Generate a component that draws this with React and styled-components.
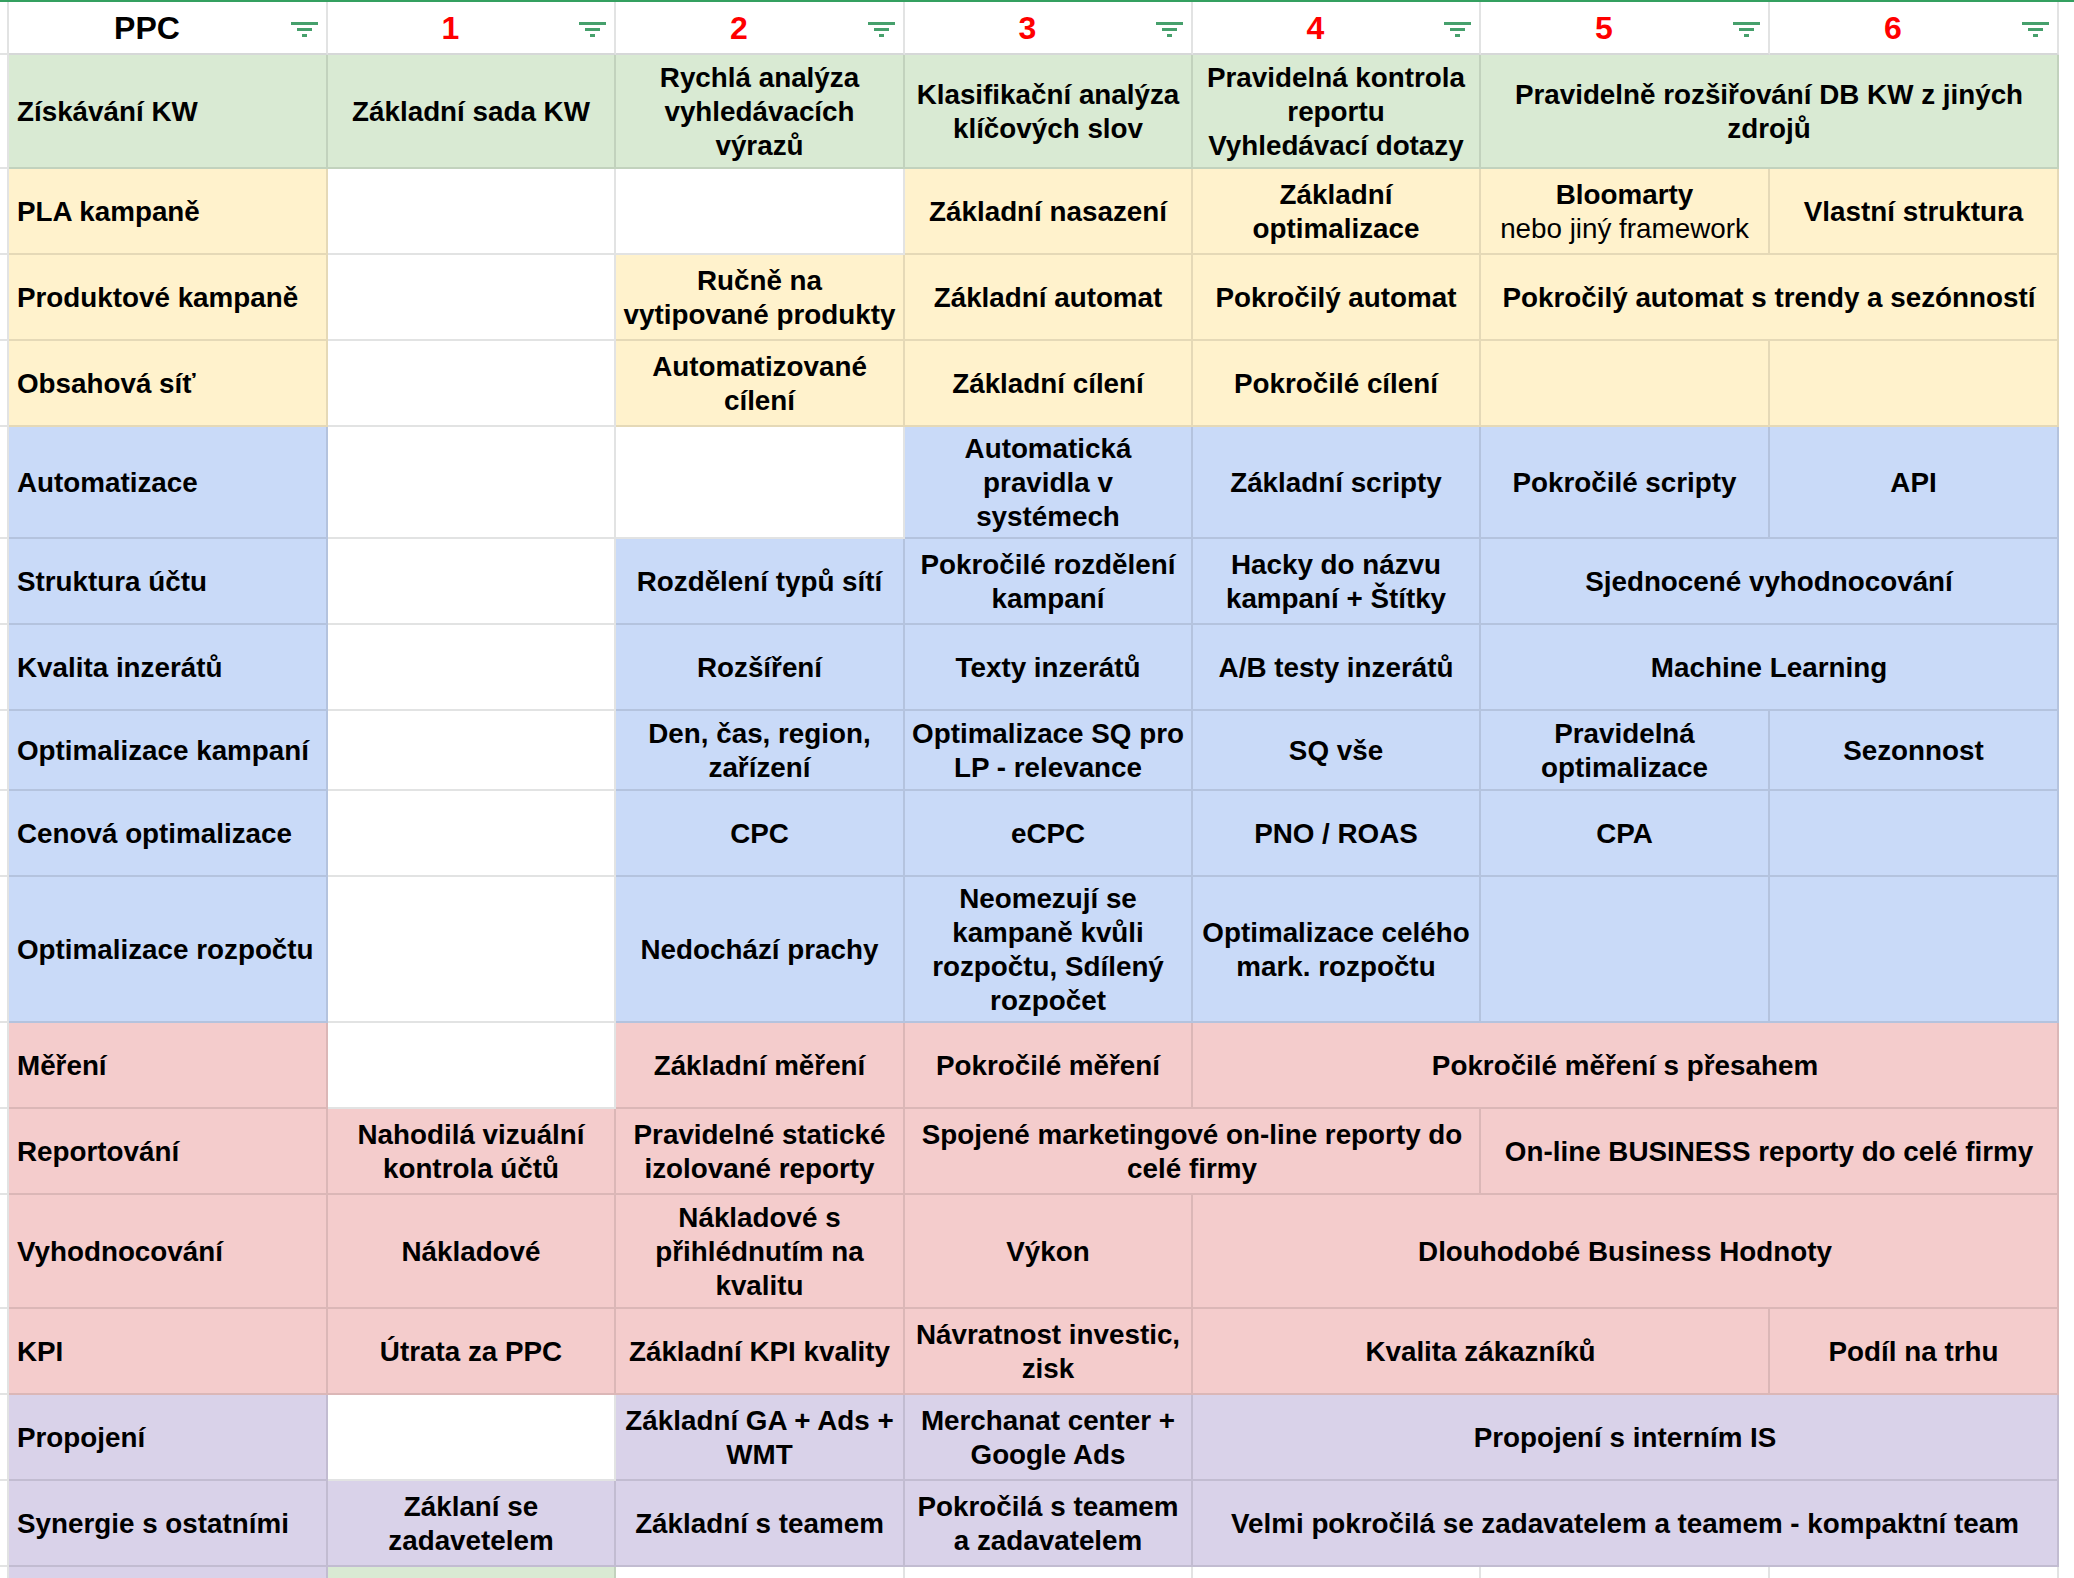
import React from 'react';
import styled, { createGlobalStyle } from 'styled-components';

const GlobalStyle = createGlobalStyle`
  html, body { margin: 0; padding: 0; background: #ffffff; }
  body { overflow: hidden; font-family: "Liberation Sans", Arial, sans-serif; }
`;

const COLORS = {
  g: '#d9ead3',
  y: '#fff2cc',
  b: '#c9daf8',
  r: '#f4cccc',
  p: '#d9d2e9',
  w: '#ffffff',
};

const COLS = '9px 319px 288px 289px 288px 288px 289px 289px 1fr';

const Sheet = styled.div`
  width: 2074px;
  height: 1578px;
  overflow: hidden;
  background: #ffffff;
  border-top: 2px solid #34a060;
  box-shadow: inset 0 1px 0 #a9d6b8;
  box-sizing: border-box;
  color: #000000;
  font-family: "Liberation Sans", Arial, sans-serif;
`;

const Row = styled.div`
  display: grid;
  grid-template-columns: ${COLS};
  height: ${(p) => p.$h}px;
`;

const Gutter = styled.div`
  background: #ffffff;
  border-right: 2px solid #e2e3e3;
  border-bottom: 2px solid #e2e3e3;
  box-sizing: border-box;
`;

const Tail = styled.div`
  background: #ffffff;
`;

const Cell = styled.div`
  grid-column: span ${(p) => p.$span || 1};
  background: ${(p) => COLORS[p.$bg] || '#ffffff'};
  border-right: 2px solid ${(p) => (p.$bg === 'w' ? '#e2e3e3' : 'rgba(0, 0, 0, 0.1)')};
  border-bottom: 2px solid ${(p) => (p.$bg === 'w' ? '#e2e3e3' : 'rgba(0, 0, 0, 0.1)')};
  box-sizing: border-box;
  display: flex;
  flex-direction: column;
  align-items: center;
  justify-content: center;
  text-align: center;
  white-space: pre;
  overflow: hidden;
  padding: 1px 3px 0;
  font-size: 27.8px;
  line-height: 34px;
  font-weight: 700;
`;

const LabelCell = styled(Cell)`
  align-items: flex-start;
  text-align: left;
  padding-left: 8px;
`;

const HeadCell = styled.div`
  position: relative;
  background: #ffffff;
  border-right: 2px solid #e2e3e3;
  border-bottom: 2px solid #d6d8d8;
  box-sizing: border-box;
  display: flex;
  align-items: center;
  justify-content: center;
  padding-right: 41px;
  padding-top: 1px;
  font-size: 32px;
  font-weight: 700;
  color: ${(p) => (p.$red ? '#ff0000' : '#000000')};
`;

const FilterIcon = styled.svg`
  position: absolute;
  right: 8px;
  top: 20px;
  width: 27px;
  height: 15px;
`;

const Light = styled.span`
  font-weight: 400;
`;

const Filter = () => (
  <FilterIcon viewBox="0 0 27 15">
    <rect x="0" y="0" width="27" height="3" fill="#46a06c" />
    <rect x="6" y="6" width="15" height="3" fill="#46a06c" />
    <rect x="11" y="12" width="5" height="3" fill="#46a06c" />
  </FilterIcon>
);

const c = (t, s = 1, bg) => ({ t, s, bg });

const ROWS = [
  {
    label: 'Získávání KW', bg: 'g', h: 114,
    cells: [
      c('Základní sada KW'),
      c('Rychlá analýza\nvyhledávacích\nvýrazů'),
      c('Klasifikační analýza\nklíčových slov'),
      c('Pravidelná kontrola\nreportu\nVyhledávací dotazy'),
      c('Pravidelně rozšiřování DB KW z jiných\nzdrojů', 2),
    ],
  },
  {
    label: 'PLA kampaně', bg: 'y', h: 86,
    cells: [
      c('', 1, 'w'),
      c('', 1, 'w'),
      c('Základní nasazení'),
      c('Základní\noptimalizace'),
      c('bloomarty'),
      c('Vlastní struktura'),
    ],
  },
  {
    label: 'Produktové kampaně', bg: 'y', h: 86,
    cells: [
      c('', 1, 'w'),
      c('Ručně na\nvytipované produkty'),
      c('Základní automat'),
      c('Pokročilý automat'),
      c('Pokročilý automat s trendy a sezónností', 2),
    ],
  },
  {
    label: 'Obsahová síť', bg: 'y', h: 86,
    cells: [
      c('', 1, 'w'),
      c('Automatizované\ncílení'),
      c('Základní cílení'),
      c('Pokročilé cílení'),
      c(''),
      c(''),
    ],
  },
  {
    label: 'Automatizace', bg: 'b', h: 112,
    cells: [
      c('', 1, 'w'),
      c('', 1, 'w'),
      c('Automatická\npravidla v\nsystémech'),
      c('Základní scripty'),
      c('Pokročilé scripty'),
      c('API'),
    ],
  },
  {
    label: 'Struktura účtu', bg: 'b', h: 86,
    cells: [
      c('', 1, 'w'),
      c('Rozdělení typů sítí'),
      c('Pokročilé rozdělení\nkampaní'),
      c('Hacky do názvu\nkampaní + Štítky'),
      c('Sjednocené vyhodnocování', 2),
    ],
  },
  {
    label: 'Kvalita inzerátů', bg: 'b', h: 86,
    cells: [
      c('', 1, 'w'),
      c('Rozšíření'),
      c('Texty inzerátů'),
      c('A/B testy inzerátů'),
      c('Machine Learning', 2),
    ],
  },
  {
    label: 'Optimalizace kampaní', bg: 'b', h: 80,
    cells: [
      c('', 1, 'w'),
      c('Den, čas, region,\nzařízení'),
      c('Optimalizace SQ pro\nLP - relevance'),
      c('SQ vše'),
      c('Pravidelná\noptimalizace'),
      c('Sezonnost'),
    ],
  },
  {
    label: 'Cenová optimalizace', bg: 'b', h: 86,
    cells: [
      c('', 1, 'w'),
      c('CPC'),
      c('eCPC'),
      c('PNO / ROAS'),
      c('CPA'),
      c(''),
    ],
  },
  {
    label: 'Optimalizace rozpočtu', bg: 'b', h: 146,
    cells: [
      c('', 1, 'w'),
      c('Nedochází prachy'),
      c('Neomezují se\nkampaně kvůli\nrozpočtu, Sdílený\nrozpočet'),
      c('Optimalizace celého\nmark. rozpočtu'),
      c(''),
      c(''),
    ],
  },
  {
    label: 'Měření', bg: 'r', h: 86,
    cells: [
      c('', 1, 'w'),
      c('Základní měření'),
      c('Pokročilé měření'),
      c('Pokročilé měření s přesahem', 3),
    ],
  },
  {
    label: 'Reportování', bg: 'r', h: 86,
    cells: [
      c('Nahodilá vizuální\nkontrola účtů'),
      c('Pravidelné statické\nizolované reporty'),
      c('Spojené marketingové on-line reporty do\ncelé firmy', 2),
      c('On-line BUSINESS reporty do celé firmy', 2),
    ],
  },
  {
    label: 'Vyhodnocování', bg: 'r', h: 114,
    cells: [
      c('Nákladové'),
      c('Nákladové s\npřihlédnutím na\nkvalitu'),
      c('Výkon'),
      c('Dlouhodobé Business Hodnoty', 3),
    ],
  },
  {
    label: 'KPI', bg: 'r', h: 86,
    cells: [
      c('Útrata za PPC'),
      c('Základní KPI kvality'),
      c('Návratnost investic,\nzisk'),
      c('Kvalita zákazníků', 2),
      c('Podíl na trhu'),
    ],
  },
  {
    label: 'Propojení', bg: 'p', h: 86,
    cells: [
      c('', 1, 'w'),
      c('Základní GA + Ads +\nWMT'),
      c('Merchanat center +\nGoogle Ads'),
      c('Propojení s interním IS', 3),
    ],
  },
  {
    label: 'Synergie s ostatními', bg: 'p', h: 86,
    cells: [
      c('Záklaní se\nzadavetelem'),
      c('Základní s teamem'),
      c('Pokročilá s teamem\na zadavatelem'),
      c('Velmi pokročilá se zadavatelem a teamem - kompaktní team', 3),
    ],
  },
];

const HEADERS = ['PPC', '1', '2', '3', '4', '5', '6'];

export default function App() {
  return (
    <>
      <GlobalStyle />
      <Sheet>
        <Row $h={53}>
          <Gutter />
          {HEADERS.map((h, i) => (
            <HeadCell key={h} $red={i > 0}>
              {h}
              <Filter />
            </HeadCell>
          ))}
          <Tail />
        </Row>
        {ROWS.map((row) => (
          <Row key={row.label} $h={row.h}>
            <Gutter />
            <LabelCell $bg={row.bg}>{row.label}</LabelCell>
            {row.cells.map((cell, i) => {
              const bg = cell.bg || row.bg;
              return (
                <Cell key={i} $bg={bg} $span={cell.s}>
                  {cell.t === 'bloomarty' ? (
                    <>
                      <span>Bloomarty</span>
                      <Light>nebo jiný framework</Light>
                    </>
                  ) : (
                    cell.t
                  )}
                </Cell>
              );
            })}
            <Tail />
          </Row>
        ))}
        <Row $h={14}>
          <Gutter />
          <LabelCell $bg="p" />
          <Cell $bg="g" />
          <Cell $bg="w" />
          <Cell $bg="w" />
          <Cell $bg="w" />
          <Cell $bg="w" />
          <Cell $bg="w" />
          <Tail />
        </Row>
      </Sheet>
    </>
  );
}
